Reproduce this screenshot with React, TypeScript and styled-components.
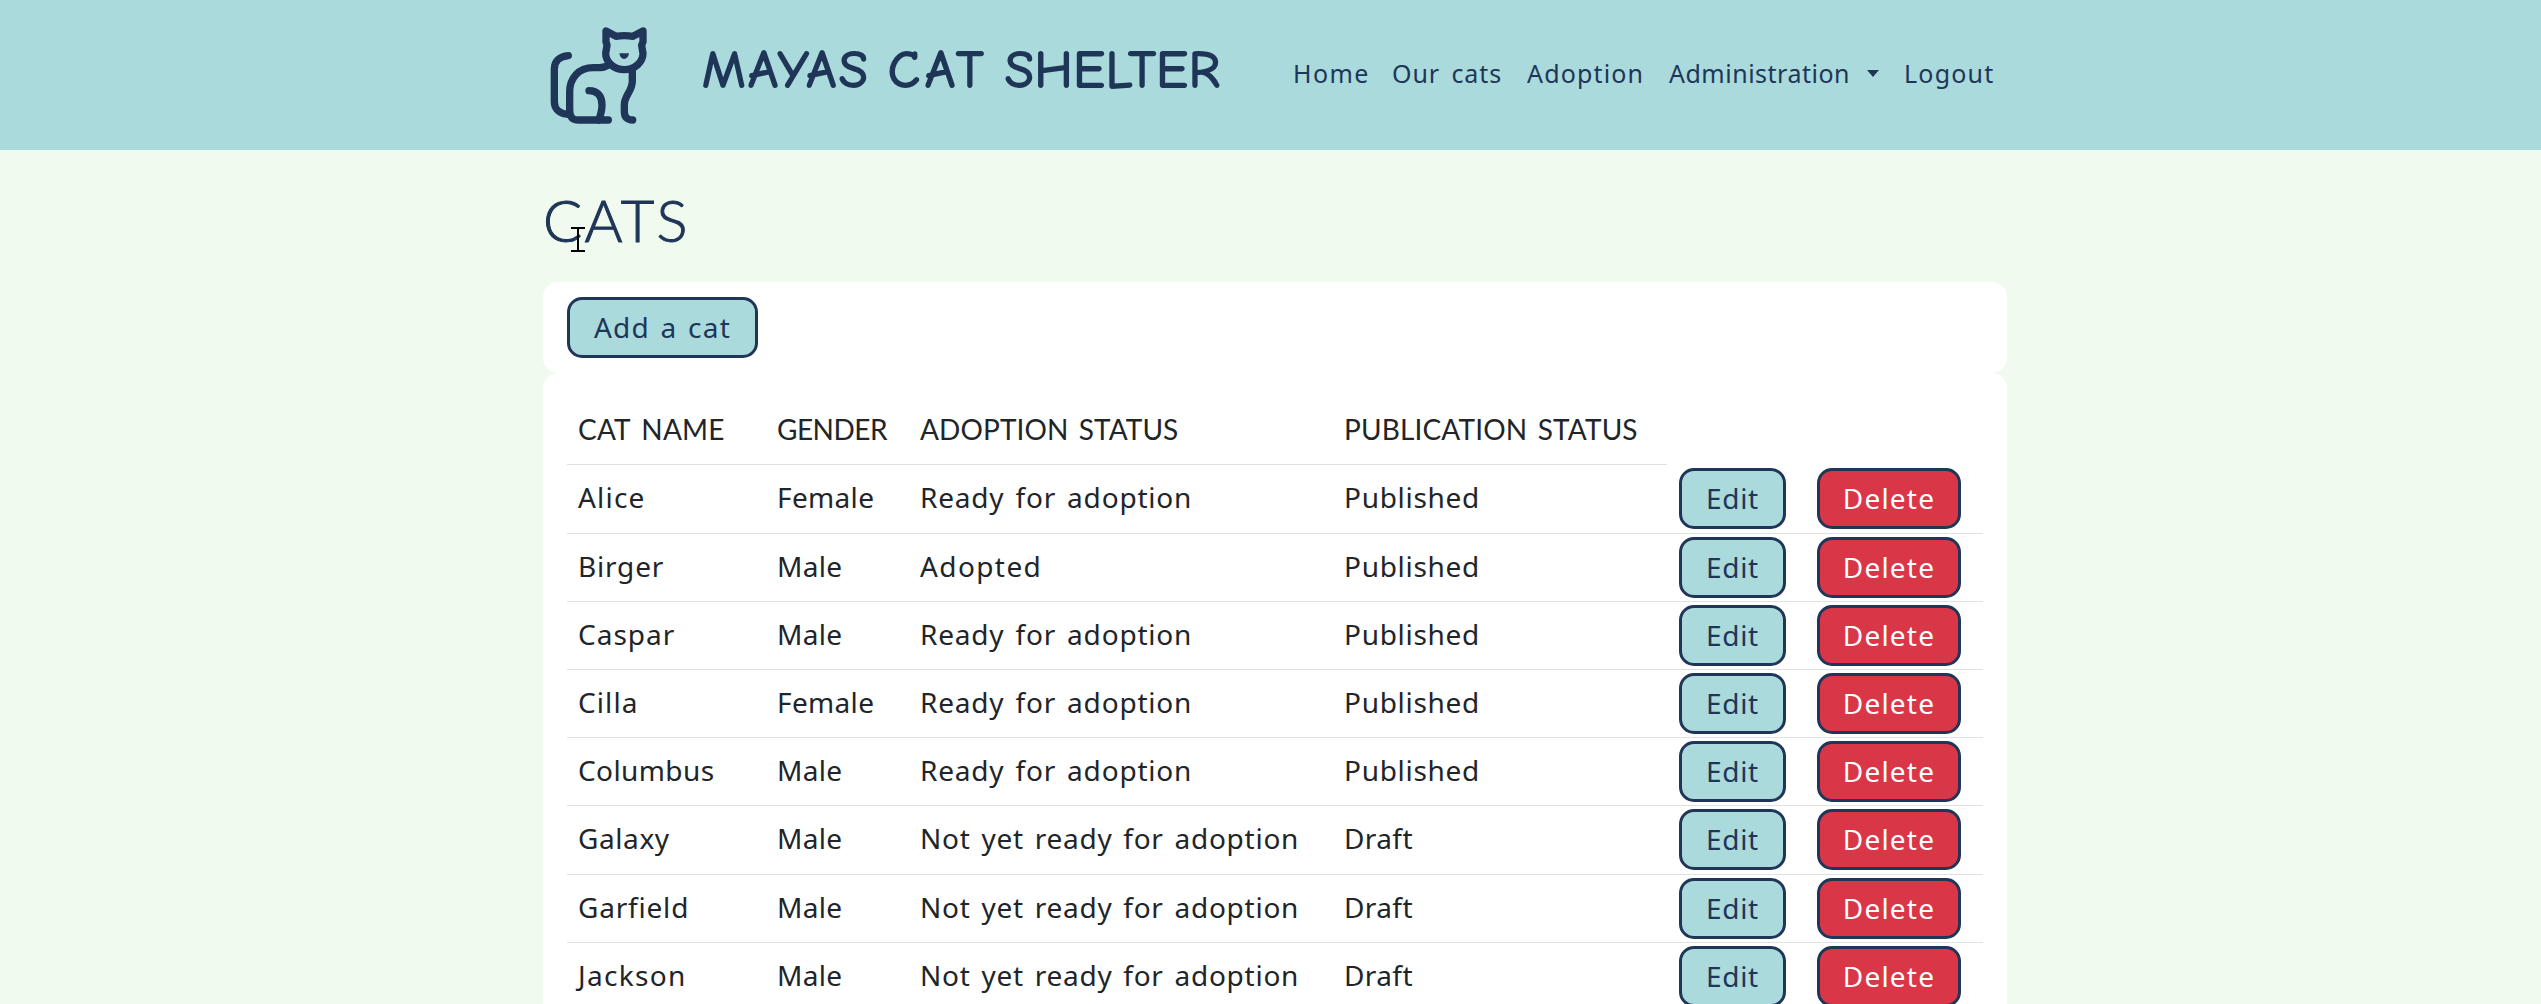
import React from "react";
import styled, { createGlobalStyle } from "styled-components";

const navy = "#203658";
const aqua = "#aadadc";
const mint = "#f0faee";
const body = '"Noto Sans", "Open Sans", sans-serif';
const caps = 'Lato, "Open Sans", sans-serif';

const GlobalStyle = createGlobalStyle`
  * { box-sizing: border-box; }
  body {
    margin: 0;
    height: 1004px;
    overflow: hidden;
    background: ${mint};
    color: #212529;
    font-family: ${body};
    font-size: 28px;
  }
`;

/* letter and word tracking of each label, in pixels */
const tracking: Record<string, [number, number?]> = {
  "CAT NAME": [0.2, 4],
  GENDER: [-0.5],
  "ADOPTION STATUS": [0.1, 3],
  "PUBLICATION STATUS": [0.15, 3.2],
  Female: [0.35],
  Male: [0.33],
  "Ready for adoption": [0.8, 3],
  "Not yet ready for adoption": [0.75, 2.8],
  Adopted: [1.4],
  Published: [0.7],
  Draft: [0.4],
  Alice: [1.2],
  Birger: [0.8],
  Caspar: [1],
  Cilla: [1.1],
  Columbus: [0.4],
  Galaxy: [0.6],
  Garfield: [0.8],
  Jackson: [1.3],
  Edit: [0.67],
  Delete: [1.2],
  "Add a cat": [1.3, 1.8],
  Home: [1.4],
  "Our cats": [0.9, 4],
  Adoption: [1.15],
  Administration: [0.5],
  Logout: [1.2],
  MAYAS: [2.5],
  CAT: [5],
  SHELTER: [1.1],
  CATS: [2.3],
};

const Tracked = styled.span<{ $letter: number; $word: number }>`
  letter-spacing: ${(p) => p.$letter}px;
  word-spacing: ${(p) => p.$word}px;
  white-space: nowrap;
`;

const Label = ({ text }: { text: string }) => {
  const [letter, word = 0] = tracking[text] ?? [0];
  return <Tracked $letter={letter} $word={word}>{text}</Tracked>;
};

const Header = styled.header`
  display: flex;
  align-items: flex-start;
  height: 150px;
  padding-left: 550px;
  background: ${aqua};
  color: ${navy};
`;

const Logo = styled.svg`
  flex: none;
  width: 98px;
  height: 98px;
  margin-top: 26px;
`;

const Brand = styled.div`
  display: grid;
  grid-template-columns: 186px 117px 1fr;
  width: 590px;
  margin: 40px 0 0 54px;
  font: 400 52px/60px "Comic Neue", Lato, sans-serif;
  -webkit-text-stroke: 2px ${navy};
`;

const Nav = styled.nav`
  display: grid;
  grid-template-columns: 99px 135px 142px 235px 100px;
  align-items: center;
  height: 146px;
  margin-left: 1px;
  font-size: 25px;
`;

const NavLink = styled.a`
  display: flex;
  align-items: center;
  gap: 17px;
  color: ${navy};
`;

const Caret = styled.i`
  border: 6.5px solid transparent;
  border-top: 7px solid ${navy};
  border-bottom: 0;
`;

const Main = styled.main`
  display: flex;
  flex-direction: column;
  width: 1464px;
  margin-left: 543px;
`;

const Title = styled.h1`
  margin: 0;
  padding-top: 35px;
  height: 132px;
  color: ${navy};
  font: 300 58px/70px ${caps};
  -webkit-text-stroke: 1px ${navy};
`;

const Card = styled.section<{ $top: number; $bottom: number }>`
  padding: ${(p) => p.$top}px 24px ${(p) => p.$bottom}px;
  border-radius: 15px;
  background: #fff;
`;

const Button = styled.button<{ $width: number; $danger?: boolean }>`
  display: flex;
  align-items: center;
  justify-content: center;
  width: ${(p) => p.$width}px;
  height: 61px;
  padding: 0 0 2px;
  border: 3px solid ${navy};
  border-radius: 15px;
  background: ${(p) => (p.$danger ? "#d93747" : aqua)};
  color: ${(p) => (p.$danger ? "#fff" : navy)};
  font: 400 28px/32px ${body};
`;

const columns = "199px 143px 424px 334px 138px 178px";

const HeadRow = styled.div`
  display: grid;
  grid-template-columns: ${columns};
  height: 68px;
  font: 400 28px/34px ${caps};
`;

const HeadCell = styled.div`
  padding: 15px 0 0 11px;
  border-bottom: 1px solid #dee2e6;
`;

const Rows = styled.div`
  display: flex;
  flex-direction: column;
`;

const Row = styled.div`
  display: grid;
  grid-template-columns: ${columns};
  height: 68px;
  border-bottom: 1px solid #dee2e6;
  &:nth-child(5n + 1) {
    height: 69px;
  }
`;

const Cell = styled.div`
  padding: 16px 0 0 11px;
  line-height: 32px;
`;

const ActionCell = styled.div`
  padding: 3px 0 0 12px;
`;

const Pointer = styled.svg`
  position: absolute;
  left: 571px;
  top: 227px;
  width: 14px;
  height: 25px;
`;

const CatLogo = () => (
  <Logo viewBox="60 48 294 294" fill="none" stroke={navy} strokeWidth="22" strokeLinecap="round" strokeLinejoin="round">
    <path d="M115 137C90 139 73 152 73 177V275C73 298 90 312 115 313" />
    <path d="M238 163C226 174 212 173 190 173C145 173 119 205 119 245V300C119 320 127 330 145 330H235" />
    <path d="M177 242C204 242 216 260 216 285C216 300 212 315 206 330" />
    <path d="M307 180V213C307 245 283 255 283 285V305C283 322 292 330 308 330" />
    <path d="M228 63V95L231 106L227 130A56 49 0 0 0 339 130L335 106L339 95V63L309 79Q283 75 258 79Z" />
    <path d="M268 130H297Q294 147 282 147Q271 147 268 130Z" fill={navy} stroke="none" />
  </Logo>
);

const links = ["Home", "Our cats", "Adoption", "Administration", "Logout"];
const heads = ["CAT NAME", "GENDER", "ADOPTION STATUS", "PUBLICATION STATUS"];
const ready = "Ready for adoption";
const notReady = "Not yet ready for adoption";
const cats = [
  ["Alice", "Female", ready, "Published"],
  ["Birger", "Male", "Adopted", "Published"],
  ["Caspar", "Male", ready, "Published"],
  ["Cilla", "Female", ready, "Published"],
  ["Columbus", "Male", ready, "Published"],
  ["Galaxy", "Male", notReady, "Draft"],
  ["Garfield", "Male", notReady, "Draft"],
  ["Jackson", "Male", notReady, "Draft"],
];

export default function App() {
  return (
    <>
      <GlobalStyle />
      <Header>
        <CatLogo />
        <Brand>
          <Label text="MAYAS" />
          <Label text="CAT" />
          <Label text="SHELTER" />
        </Brand>
        <Nav>
          {links.map((link) => (
            <NavLink key={link}>
              <Label text={link} />
              {link === "Administration" && <Caret />}
            </NavLink>
          ))}
        </Nav>
      </Header>
      <Main>
        <Title><Label text="CATS" /></Title>
        <Card $top={15} $bottom={15}>
          <Button $width={191}><Label text="Add a cat" /></Button>
        </Card>
        <Card $top={24} $bottom={24}>
          <HeadRow>
            {heads.map((head) => (
              <HeadCell key={head}><Label text={head} /></HeadCell>
            ))}
          </HeadRow>
          <Rows>
            {cats.map((cat) => (
              <Row key={cat[0]}>
                {cat.map((value) => (
                  <Cell key={value}><Label text={value} /></Cell>
                ))}
                <ActionCell><Button $width={107}><Label text="Edit" /></Button></ActionCell>
                <ActionCell><Button $width={144} $danger><Label text="Delete" /></Button></ActionCell>
              </Row>
            ))}
          </Rows>
        </Card>
      </Main>
      <Pointer viewBox="0 0 14 25" stroke="#000" strokeWidth="2" shapeRendering="crispEdges">
        <path d="M0 1H5M9 1H14M0 24H5M9 24H14M7 2V23M5 1H9M5 24H9" />
      </Pointer>
    </>
  );
}
